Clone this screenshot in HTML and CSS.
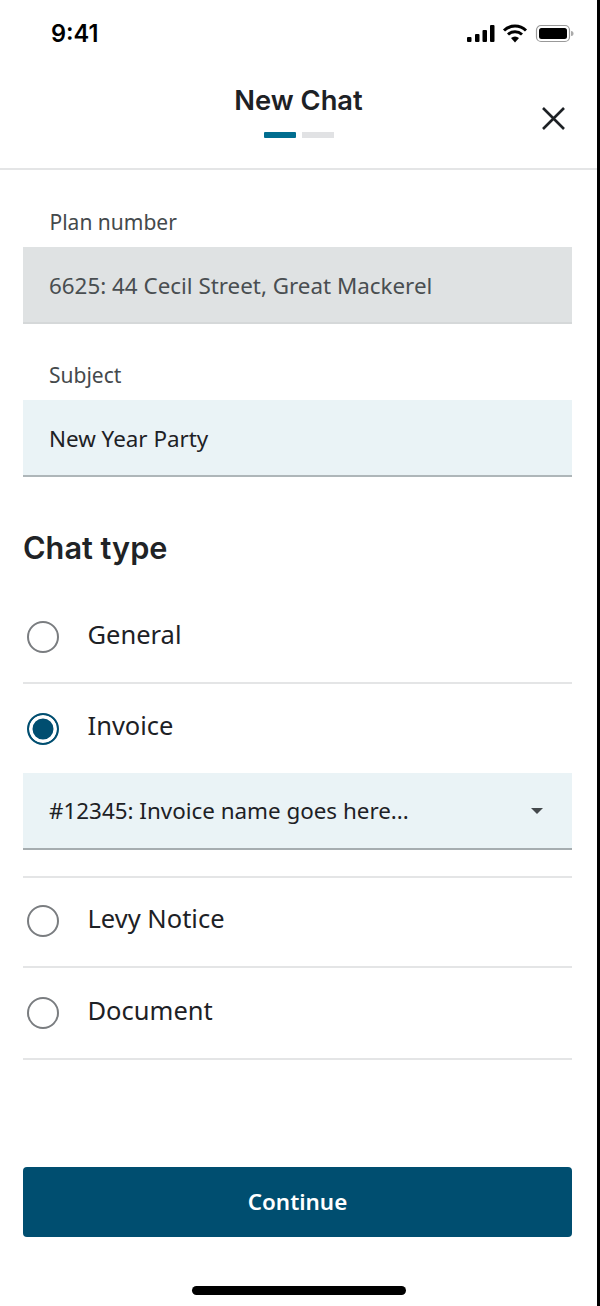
FILE: index.html
```html
<!DOCTYPE html>
<html lang="en">
<head>
<meta charset="utf-8">
<title>New Chat</title>
<link rel="stylesheet" href="styles.css">
</head>
<body>
<div class="screen">
  <div class="status">
    <span class="time">9:41</span>
    <svg class="status-icons" width="108" height="20" viewBox="0 0 108 20">
      <rect x="1" y="13" width="4.500" height="5" rx="1"/>
      <rect x="9" y="10" width="4.500" height="8" rx="1"/>
      <rect x="16.500" y="6" width="4.500" height="12" rx="1"/>
      <rect x="24" y="1" width="4.500" height="17" rx="1"/>
      <path d="M38 6.500a16 16 0 0 1 22 0" fill="none" stroke="#000" stroke-width="3"/>
      <path d="M42 10.500a10.500 10.500 0 0 1 14 0" fill="none" stroke="#000" stroke-width="3"/>
      <path d="M45 14a6 6 0 0 1 8 0l-4 4.500z"/>
      <rect x="70.500" y="1.500" width="33" height="16" rx="4.500" fill="none" stroke="#999" stroke-width="1.200"/>
      <rect x="73" y="4" width="28" height="11" rx="2.500"/>
      <path d="M105 7v5a2.500 2.500 0 0 0 0-5z" fill="#aaa"/>
    </svg>
  </div>
  <header class="head">
    <h1 class="title">New Chat</h1>
    <div class="steps"><span class="step on"></span><span class="step"></span></div>
    <svg class="close" width="24" height="24" viewBox="0 0 24 24"><path d="M2 2l21 21M23 2L2 23" fill="none" stroke="#1d2125" stroke-width="2.600"/></svg>
  </header>
  <main class="body">
    <label class="label first">Plan number</label>
    <div class="field off">6625: 44 Cecil Street, Great Mackerel</div>
    <label class="label second">Subject</label>
    <div class="field">New Year Party</div>
    <h2 class="section">Chat type</h2>
    <div class="option one"><span class="radio"></span><span>General</span></div>
    <div class="invoice">
      <div class="option sel"><span class="radio on"></span><span>Invoice</span></div>
      <div class="field select"><span>#12345: Invoice name goes here...</span><span class="caret"></span></div>
    </div>
    <div class="option levy"><span class="radio"></span><span>Levy Notice</span></div>
    <div class="option"><span class="radio"></span><span>Document</span></div>
    <button class="cta">Continue</button>
  </main>
  <div class="home"></div>
</div>
</body>
</html>
```
FILE: styles.css
```css
* { box-sizing: border-box; }
html, body { margin: 0; padding: 0; background: #fff; }
.screen {
  width: 600px;
  height: 1306px;
  border-right: 3px solid #000;
  font-family: "Noto Sans", sans-serif;
  color: #1d2125;
  display: flex;
  flex-direction: column;
  align-items: stretch;
  overflow: hidden;
}
.status {
  height: 66px;
  display: flex;
  justify-content: space-between;
  padding: 18px 23px 0 51px;
}
.time { font: 600 23.600px/32px Inter, sans-serif; color: #000; }
.status-icons { margin-top: 6px; }
.head {
  height: 104px;
  border-bottom: 2px solid #e4e5e6;
  display: flex;
  flex-direction: column;
  align-items: center;
  position: relative;
  margin-right: -3px;
}
.title { margin: 15px 3px 0 0; font: 600 27.300px/40px Inter, sans-serif; color: #1d2125; }
.steps { display: flex; gap: 6px; margin: 11px 3px 0 0; }
.step { width: 32px; height: 6px; background: #e1e2e4; }
.step.on { background: #006d8f; border-radius: 1px; }
.close { position: absolute; left: 541px; top: 40px; }
.body { padding: 0 25px 0 23px; display: flex; flex-direction: column; flex: 1; }
.label { font-size: 21px; line-height: 28px; color: #44494c; padding-left: 26px; display: block; }
.label.first { margin-top: 38px; height: 39px; padding-left: 26.500px; }
.label.second { margin-top: 37px; height: 39px; }
.field {
  height: 77px;
  background: #eaf3f6;
  border-bottom: 2px solid #aeb6b9;
  font-size: 22.400px;
  line-height: 74px;
  padding: 2px 0 0 26px;
  color: #1d2125;
}
.field.off { background: #dfe2e3; border-bottom-color: #d5d8d9; color: #494e51; }
.section { margin: 50px 0 0; font: 600 30.700px/42px Inter, sans-serif; color: #202326; height: 42px; }
.option {
  height: 92px;
  border-bottom: 2px solid #e4e5e6;
  display: flex;
  align-items: center;
  gap: 29px;
  font-size: 25.500px;
  padding: 0 0 6px 3.500px;
  color: #1d2125;
}
.option.one { margin-top: 22px; height: 93px; }
.option.sel { border-bottom: 0; height: 89px; padding-bottom: 8px; }
.option.levy { height: 90px; padding-bottom: 8px; }
.sel .radio { margin-top: 8px; }
.invoice { border-bottom: 2px solid #e4e5e6; padding-bottom: 26px; }
.radio {
  width: 32px;
  height: 32px;
  border: 2.500px solid #7a7d80;
  border-radius: 50%;
  flex: none;
  margin-top: 6px;
}
.radio.on {
  border-color: #004e70;
  background: #004e70;
  box-shadow: inset 0 0 0 3.500px #fff;
}
.select {
  display: flex;
  justify-content: space-between;
  align-items: center;
  line-height: 30px;
  padding: 0 29px 0 26px;
  border-bottom-color: #a6adb0;
}
.caret {
  width: 0;
  height: 0;
  border-left: 6px solid transparent;
  border-right: 6px solid transparent;
  border-top: 6px solid #44494c;
}
.cta {
  margin-top: auto;
  margin-bottom: 49px;
  height: 70px;
  background: #004e70;
  color: #fff;
  border: 0;
  border-radius: 4px;
  font: 600 22.400px/70px "Noto Sans", sans-serif;
  padding: 0;
}
.home {
  width: 214px;
  height: 9px;
  border-radius: 5px;
  background: #000;
  margin: 0 0 11px 192px;
}
```
